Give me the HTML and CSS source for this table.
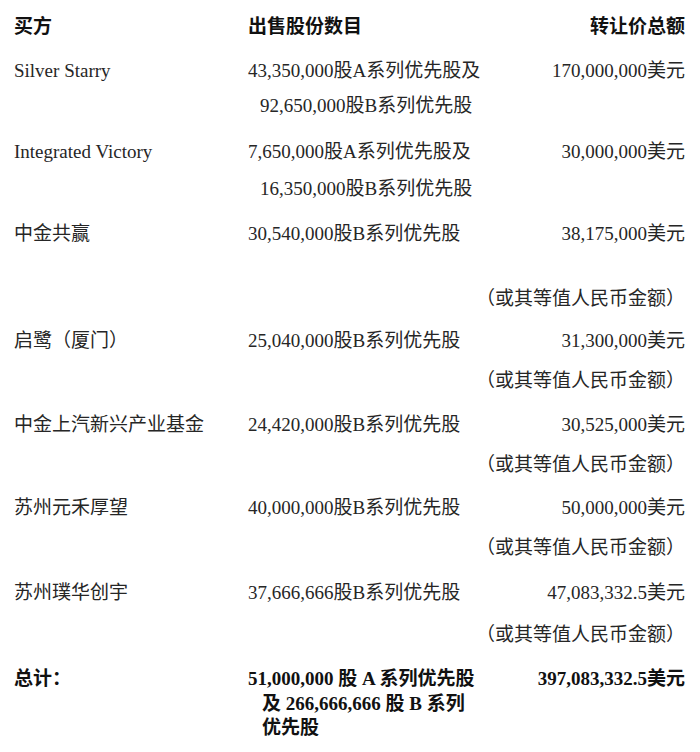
FILE: index.html
```html
<!DOCTYPE html>
<html lang="zh-CN">
<head>
<meta charset="utf-8">
<title>转让</title>
<link rel="stylesheet" href="styles.css">
</head>
<body>
<div class="sheet">
  <div class="row r-head">
    <div class="c1 b">买方</div>
    <div class="c2 b">出售股份数目</div>
    <div class="c3 b">转让价总额</div>
  </div>
  <div class="row r-ss">
    <div class="c1">Silver Starry</div>
    <div class="c2"><div>43,350,000股A系列优先股及</div><div class="indent">92,650,000股B系列优先股</div></div>
    <div class="c3">170,000,000美元</div>
  </div>
  <div class="row r-iv">
    <div class="c1">Integrated Victory</div>
    <div class="c2"><div>7,650,000股A系列优先股及</div><div class="indent">16,350,000股B系列优先股</div></div>
    <div class="c3">30,000,000美元</div>
  </div>
  <div class="row r-zj">
    <div class="c1">中金共赢</div>
    <div class="c2">30,540,000股B系列优先股</div>
    <div class="c3"><div>38,175,000美元</div><div class="note far">（或其等值人民币金额）</div></div>
  </div>
  <div class="row r-ql">
    <div class="c1">启鹭（厦门）</div>
    <div class="c2">25,040,000股B系列优先股</div>
    <div class="c3"><div>31,300,000美元</div><div class="note">（或其等值人民币金额）</div></div>
  </div>
  <div class="row r-sq">
    <div class="c1">中金上汽新兴产业基金</div>
    <div class="c2">24,420,000股B系列优先股</div>
    <div class="c3"><div>30,525,000美元</div><div class="note">（或其等值人民币金额）</div></div>
  </div>
  <div class="row r-yh">
    <div class="c1">苏州元禾厚望</div>
    <div class="c2">40,000,000股B系列优先股</div>
    <div class="c3"><div>50,000,000美元</div><div class="note">（或其等值人民币金额）</div></div>
  </div>
  <div class="row r-ph">
    <div class="c1">苏州璞华创宇</div>
    <div class="c2">37,666,666股B系列优先股</div>
    <div class="c3"><div>47,083,332.5美元</div><div class="note">（或其等值人民币金额）</div></div>
  </div>
  <div class="row r-total">
    <div class="c1 b">总计：</div>
    <div class="c2 b"><div>51,000,000 股 A 系列优先股</div><div class="indent2">及 266,666,666 股 B 系列</div><div class="indent2">优先股</div></div>
    <div class="c3 b">397,083,332.5美元</div>
  </div>
</div>
</body>
</html>
```

FILE: styles.css
```css
html, body {
  margin: 0;
  padding: 0;
  background: #ffffff;
}

.sheet {
  padding: 0 15px 0 14px;
  font-family: "Liberation Serif", "Noto Sans CJK SC", serif;
  font-size: 19px;
  color: #262626;
}

.row {
  display: grid;
  grid-template-columns: 234px 1fr auto;
  line-height: 40px;
}

.c3 {
  text-align: right;
}

.b {
  font-weight: bold;
  color: #111111;
}

.indent {
  padding-left: 12px;
}

.indent2 {
  padding-left: 14px;
}

.r-head {
  padding-top: 7px;
}

.r-ss {
  margin-top: 6px;
  line-height: 35px;
}

.r-iv {
  margin-top: 10px;
  line-height: 37px;
}

.r-zj {
  margin-top: 7px;
}

.note.far {
  margin-top: 25px;
}

.r-ql {
  margin-top: 2px;
}

.r-sq {
  margin-top: 4px;
}

.r-yh {
  margin-top: 3px;
}

.r-ph {
  margin-top: 4px;
  line-height: 42px;
}

.r-total {
  margin-top: 11px;
  line-height: 24.5px;
}
```
